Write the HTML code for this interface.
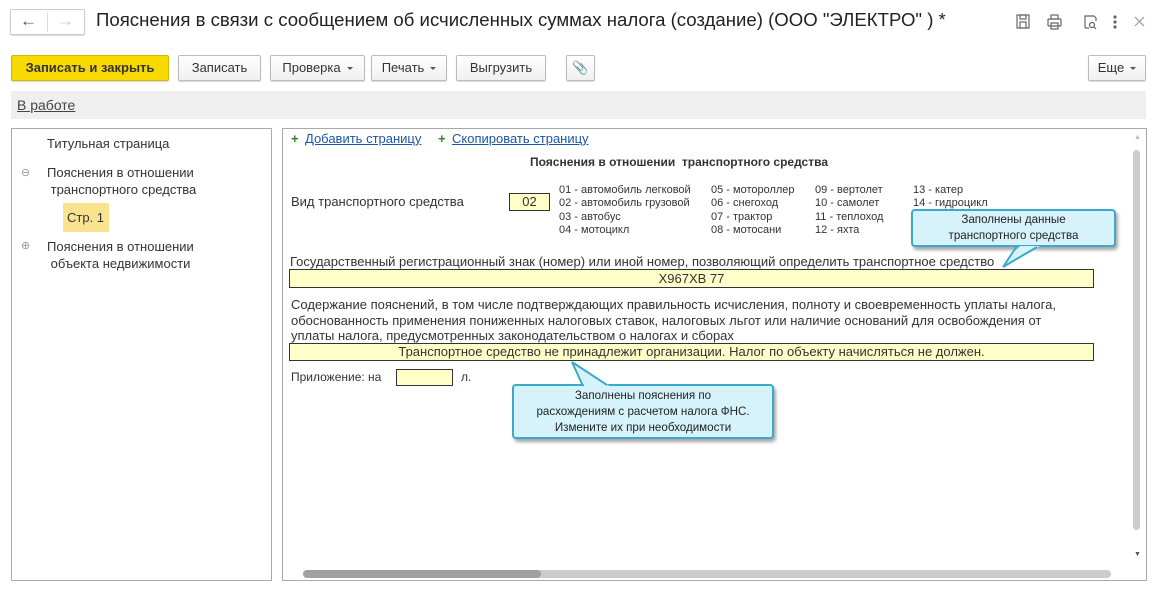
<!DOCTYPE html>
<html><head><meta charset="utf-8"><style>
*{box-sizing:border-box;margin:0;padding:0}
body{width:1163px;height:591px;background:#fff;font-family:"Liberation Sans",sans-serif;color:#333;position:relative;overflow:hidden;font-size:13px}
.a{position:absolute;white-space:nowrap}
.btn{position:absolute;top:55px;height:26px;border:1px solid #bbb;border-radius:2px;background:linear-gradient(#fff,#f0f0f0);font-size:13px;color:#333;text-align:center;line-height:24px;box-shadow:0 1px 1px rgba(0,0,0,.15)}
.car{display:inline-block;width:0;height:0;border-left:3px solid transparent;border-right:3px solid transparent;border-top:3px solid #555;vertical-align:middle;margin-left:6px}
.y{position:absolute;background:#fefec8;border:1px solid #333}
.c{font-size:11px;line-height:13.3px;color:#333}
.tip{position:absolute;background:#d6f3fb;border:2px solid #3ba9c8;border-radius:4px;box-shadow:2px 3px 3px rgba(0,0,0,.35);text-align:center;font-size:11.6px;color:#222;line-height:16px}
</style></head><body>
<div class="a" style="left:10px;top:9px;width:75px;height:26px;border:1px solid #ccc;border-radius:2px;box-shadow:0 1px 1px rgba(0,0,0,.15)"></div>
<div class="a" style="left:47px;top:12px;width:1px;height:20px;background:#ddd"></div>
<div class="a" style="left:20px;top:9px;font-size:17px;color:#555;line-height:24px">&#8592;</div>
<div class="a" style="left:57px;top:9px;font-size:17px;color:#ccc;line-height:24px">&#8594;</div>
<div class="a" style="left:96px;top:9px;font-size:18.6px;color:#222">Пояснения в связи с сообщением об исчисленных суммах налога (создание) (ООО "ЭЛЕКТРО" ) *</div>
<svg class="a" style="left:1015px;top:13px" width="130" height="18" fill="none" stroke="#666" stroke-width="1.2">
<rect x="2" y="2" width="12" height="13"/><rect x="5" y="2" width="6" height="4"/><rect x="5" y="9" width="6" height="6"/>
<rect x="33" y="6" width="13" height="7" rx="1"/><rect x="36" y="2" width="7" height="4"/><rect x="36" y="10" width="7" height="6"/>
<path d="M70 15V3h9l2 2v3M70 15h4"/><circle cx="77" cy="12" r="2.5"/><path d="M79 14l2 2"/>
<circle cx="100" cy="4" r="1" fill="#666"/><circle cx="100" cy="9" r="1" fill="#666"/><circle cx="100" cy="14" r="1" fill="#666"/>
<path d="M120 4l9 9M129 4l-9 9" stroke="#999"/></svg>
<div class="btn" style="left:11px;width:158px;background:#f7d900;border-color:#d4b800;font-weight:bold;color:#333">Записать и закрыть</div>
<div class="btn" style="left:178px;width:83px">Записать</div>
<div class="btn" style="left:270px;width:95px">Проверка<span class="car"></span></div>
<div class="btn" style="left:371px;width:76px">Печать<span class="car"></span></div>
<div class="btn" style="left:456px;width:90px">Выгрузить</div>
<div class="btn" style="left:566px;width:29px;color:#777">&#128206;</div>
<div class="btn" style="left:1088px;width:58px">Еще<span class="car"></span></div>
<div class="a" style="left:11px;top:91px;width:1135px;height:28px;background:#efefef"></div>
<div class="a" style="left:17px;top:97px;text-decoration:underline;font-size:14px;color:#444">В работе</div>
<div class="a" style="left:11px;top:128px;width:261px;height:453px;border:1px solid #aaa"></div>
<div class="a" style="left:47px;top:136px">Титульная страница</div>
<div class="a" style="left:21px;top:166px;color:#999;font-size:11px">&#8854;</div>
<div class="a" style="left:47px;top:164px;line-height:17px">Пояснения в отношении<br>&nbsp;транспортного средства</div>
<div class="a" style="left:63px;top:203px;width:46px;height:29px;background:#fae38e;line-height:29px;padding-left:4px">Стр. 1</div>
<div class="a" style="left:21px;top:239px;color:#999;font-size:11px">&#8853;</div>
<div class="a" style="left:47px;top:238px;line-height:17px">Пояснения в отношении<br>&nbsp;объекта недвижимости</div>
<div class="a" style="left:282px;top:128px;width:865px;height:453px;border:1px solid #aaa"></div>
<div class="a" style="left:291px;top:131px;color:#2a8a1f;font-weight:bold">+</div>
<div class="a" style="left:305px;top:131px;color:#1a56a8;text-decoration:underline">Добавить страницу</div>
<div class="a" style="left:438px;top:131px;color:#2a8a1f;font-weight:bold">+</div>
<div class="a" style="left:452px;top:131px;color:#1a56a8;text-decoration:underline">Скопировать страницу</div>
<div class="a" style="left:530px;top:155px;font-weight:bold;font-size:12px">Пояснения в отношении&nbsp; транспортного средства</div>
<div class="a" style="left:291px;top:194px">Вид транспортного средства</div>
<div class="y" style="left:509px;top:193px;width:41px;height:18px;text-align:center;line-height:16px">02</div>
<div class="a c" style="left:559px;top:184px">01 - автомобиль легковой<br>02 - автомобиль грузовой<br>03 - автобус<br>04 - мотоцикл</div>
<div class="a c" style="left:711px;top:184px">05 - мотороллер<br>06 - снегоход<br>07 - трактор<br>08 - мотосани</div>
<div class="a c" style="left:815px;top:184px">09 - вертолет<br>10 - самолет<br>11 - теплоход<br>12 - яхта</div>
<div class="a c" style="left:913px;top:184px">13 - катер<br>14 - гидроцикл</div>
<div class="a" style="left:290px;top:254px">Государственный регистрационный знак (номер) или иной номер, позволяющий определить транспортное средство</div>
<div class="y" style="left:289px;top:269px;width:805px;height:19px;text-align:center;line-height:17px">Х967ХВ 77</div>
<div class="a" style="left:291px;top:297px;line-height:15.5px">Содержание пояснений, в том числе подтверждающих правильность исчисления, полноту и своевременность уплаты налога,<br>обоснованность применения пониженных налоговых ставок, налоговых льгот или наличие оснований для освобождения от<br>уплаты налога, предусмотренных законодательством о налогах и сборах</div>
<div class="y" style="left:289px;top:343px;width:805px;height:18px;text-align:center;line-height:16px">Транспортное средство не принадлежит организации. Налог по объекту начисляться не должен.</div>
<div class="a" style="left:291px;top:370px;font-size:12px">Приложение: на</div>
<div class="y" style="left:396px;top:369px;width:57px;height:17px"></div>
<div class="a" style="left:461px;top:370px;font-size:12px">л.</div>
<div class="a" style="left:1133px;top:150px;width:7px;height:380px;background:#ccc;border-radius:4px"></div>
<div class="a" style="left:1134px;top:134px;font-size:7px;color:#bbb">&#9650;</div>
<div class="a" style="left:1134px;top:551px;font-size:7px;color:#555">&#9660;</div>
<div class="a" style="left:303px;top:570px;width:808px;height:8px;background:#ccc;border-radius:4px"></div>
<div class="a" style="left:303px;top:570px;width:238px;height:8px;background:#a0a0a0;border-radius:4px"></div>
<div class="tip" style="left:911px;top:209px;width:205px;height:38px;padding-top:1px">Заполнены данные<br>транспортного средства</div>
<svg class="a" style="left:995px;top:243px" width="50" height="25"><path d="M8 24L25 3h20z" fill="#d6f3fb"/><path d="M8 24L22 3M8 24L42 4" stroke="#3ba9c8" stroke-width="2" fill="none"/></svg>
<div class="tip" style="left:512px;top:384px;width:262px;height:55px;padding-top:2px">Заполнены пояснения по<br>расхождениям с расчетом налога ФНС.<br>Измените их при необходимости</div>
<svg class="a" style="left:565px;top:360px" width="50" height="28"><path d="M7 2L20 27h26z" fill="#d6f3fb"/><path d="M7 2L18 26M7 2L42 25" stroke="#3ba9c8" stroke-width="2" fill="none"/></svg>
</body></html>
